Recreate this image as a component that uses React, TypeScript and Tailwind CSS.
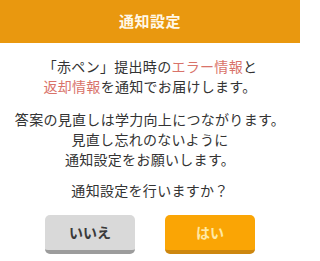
export default function App() {
  return (
    <div
      className="w-[300px] h-[261px] bg-white text-[#333333] overflow-hidden"
      style={{ fontFamily: '"Noto Sans CJK JP", "Noto Sans", sans-serif' }}
    >
      <div className="h-[43px] bg-[#e9980f] flex items-center justify-center">
        <h1 className="text-[15px] font-bold text-[#fff8e8] tracking-[0.5px]">通知設定</h1>
      </div>

      <div className="text-center text-[14px] leading-[20px] tracking-[0.3px]">
        <p className="mt-[13px]">
          「赤ペン」提出時の<span className="text-[#d9736a]">エラー情報</span>と
          <br />
          <span className="text-[#d9736a]">返却情報</span>を通知でお届けします。
        </p>

        <p className="mt-[13px]">
          答案の見直しは学力向上につながります。
          <br />
          見直し忘れのないように
          <br />
          通知設定をお願いします。
        </p>

        <p className="mt-[11px]">通知設定を行いますか？</p>
      </div>

      <div className="mt-[15px] flex justify-center gap-[30px]">
        <button className="w-[90px] h-[39px] rounded-[5px] bg-[#d9d9d9] border-b-4 border-[#9c9c9c] text-[14px] font-bold text-[#3a3a3a]">
          いいえ
        </button>
        <button className="w-[90px] h-[39px] rounded-[5px] bg-[#faa505] border-b-4 border-[#cd870f] text-[14px] font-semibold text-[#ffe9a6]">
          はい
        </button>
      </div>
    </div>
  )
}
